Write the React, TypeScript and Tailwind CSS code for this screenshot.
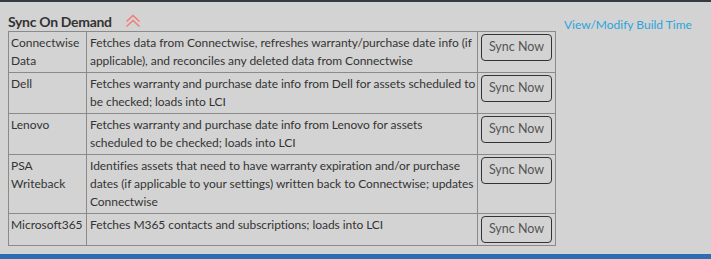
import React from "react";

const rows: { name: React.ReactNode; desc: string }[] = [
  {
    name: (
      <>
        Connectwise
        <br />
        Data
      </>
    ),
    desc: "Fetches data from Connectwise, refreshes warranty/purchase date info (if applicable), and reconciles any deleted data from Connectwise",
  },
  {
    name: "Dell",
    desc: "Fetches warranty and purchase date info from Dell for assets scheduled to be checked; loads into LCI",
  },
  {
    name: "Lenovo",
    desc: "Fetches warranty and purchase date info from Lenovo for assets scheduled to be checked; loads into LCI",
  },
  {
    name: (
      <>
        PSA
        <br />
        Writeback
      </>
    ),
    desc: "Identifies assets that need to have warranty expiration and/or purchase dates (if applicable to your settings) written back to Connectwise; updates Connectwise",
  },
  {
    name: "Microsoft365",
    desc: "Fetches M365 contacts and subscriptions; loads into LCI",
  },
];

function DoubleChevronUp() {
  return (
    <svg width="16" height="14" viewBox="0 0 16 14" fill="none" className="block">
      <path d="M1.5 7.5 L8 1.5 L14.5 7.5" stroke="#f07a78" strokeWidth="1.4" />
      <path d="M1.5 12.5 L8 6.5 L14.5 12.5" stroke="#f07a78" strokeWidth="1.4" />
    </svg>
  );
}

export default function App() {
  return (
    <div className="w-[711px] h-[259px] bg-[#d3d3d3] flex flex-col font-['Lato',sans-serif] text-[#333]">
      <div className="h-[2px] bg-[#353b41] shrink-0" />
      <div className="flex-1 flex pl-2">
        <div className="w-[547px] flex flex-col">
          <div className="flex items-center h-[29px] pt-[10px]">
            <span className="text-[14px] font-bold tracking-[-0.3px] text-[#333] leading-[18px]">Sync On Demand</span>
            <span className="ml-[13px] mt-[-1px]">
              <DoubleChevronUp />
            </span>
          </div>
          <table className="w-[547px] table-fixed border-collapse border border-[#222] text-[12px] leading-[18px] text-[#333]">
            <colgroup>
              <col className="w-[78px]" />
              <col className="w-[391px]" />
              <col className="w-[78px]" />
            </colgroup>
            <tbody>
              {rows.map((r, i) => (
                <tr key={i}>
                  <td className="align-top border border-[#8a8a8a] pl-[2px] pr-0 py-[2px]">{r.name}</td>
                  <td className="align-top border border-[#8a8a8a] pl-[3px] pr-0 py-[2px] tracking-[-0.05px]">{r.desc}</td>
                  <td className="align-top border border-[#8a8a8a] pl-[3px] pr-[2px] py-[2px]">
                    <button className="w-[71px] h-[27px] border border-[#333] rounded-[4px] bg-transparent text-[12.5px] text-[#555] leading-none">
                      Sync Now
                    </button>
                  </td>
                </tr>
              ))}
            </tbody>
          </table>
        </div>
        <div className="ml-[9px] pt-[9px]">
          <span className="text-[12px] leading-[16px] text-[#2aa5dc]">View/Modify Build Time</span>
        </div>
      </div>
      <div className="h-[5px] bg-[#2b6cb3] shrink-0" />
    </div>
  );
}
